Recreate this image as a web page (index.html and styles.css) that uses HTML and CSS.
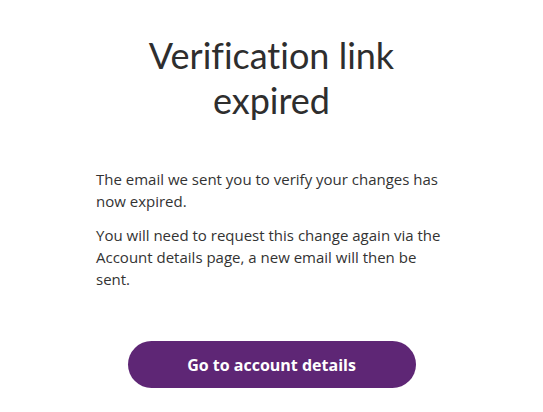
FILE: index.html
```html
<!DOCTYPE html>
<html lang="en">
<head>
<meta charset="utf-8">
<title>Verification link expired</title>
<link rel="stylesheet" href="styles.css">
</head>
<body>
<main class="page">
  <h1 class="title">Verification link expired</h1>
  <div class="content">
    <p>The email we sent you to verify your changes has now expired.</p>
    <p>You will need to request this change again via the Account details page, a new email will then be sent.</p>
  </div>
  <a class="btn" href="#">Go to account details</a>
</main>
</body>
</html>
```
FILE: styles.css
```css
html, body {
  margin: 0;
  padding: 0;
  background: #fff;
}
body {
  font-family: "Open Sans", "Liberation Sans", sans-serif;
  color: #333;
}
.page {
  display: flex;
  flex-direction: column;
  align-items: center;
  padding-top: 33px;
}
.title {
  margin: 0;
  width: 260px;
  text-align: center;
  font-family: "Lato", "Liberation Sans", sans-serif;
  font-variant-ligatures: none;
  font-weight: 400;
  font-size: 36px;
  line-height: 45px;
  color: #2e2e2e;
}
.content {
  width: 351px;
  margin-top: 45px;
  font-size: 15px;
  line-height: 22px;
}
.content p {
  margin: 0 0 12px;
}
.btn {
  margin-top: 39px;
  width: 288px;
  height: 47px;
  border-radius: 24px;
  background: #5e2675;
  color: #fff;
  font-weight: 700;
  font-size: 16px;
  text-decoration: none;
  display: flex;
  align-items: center;
  justify-content: center;
}
```
